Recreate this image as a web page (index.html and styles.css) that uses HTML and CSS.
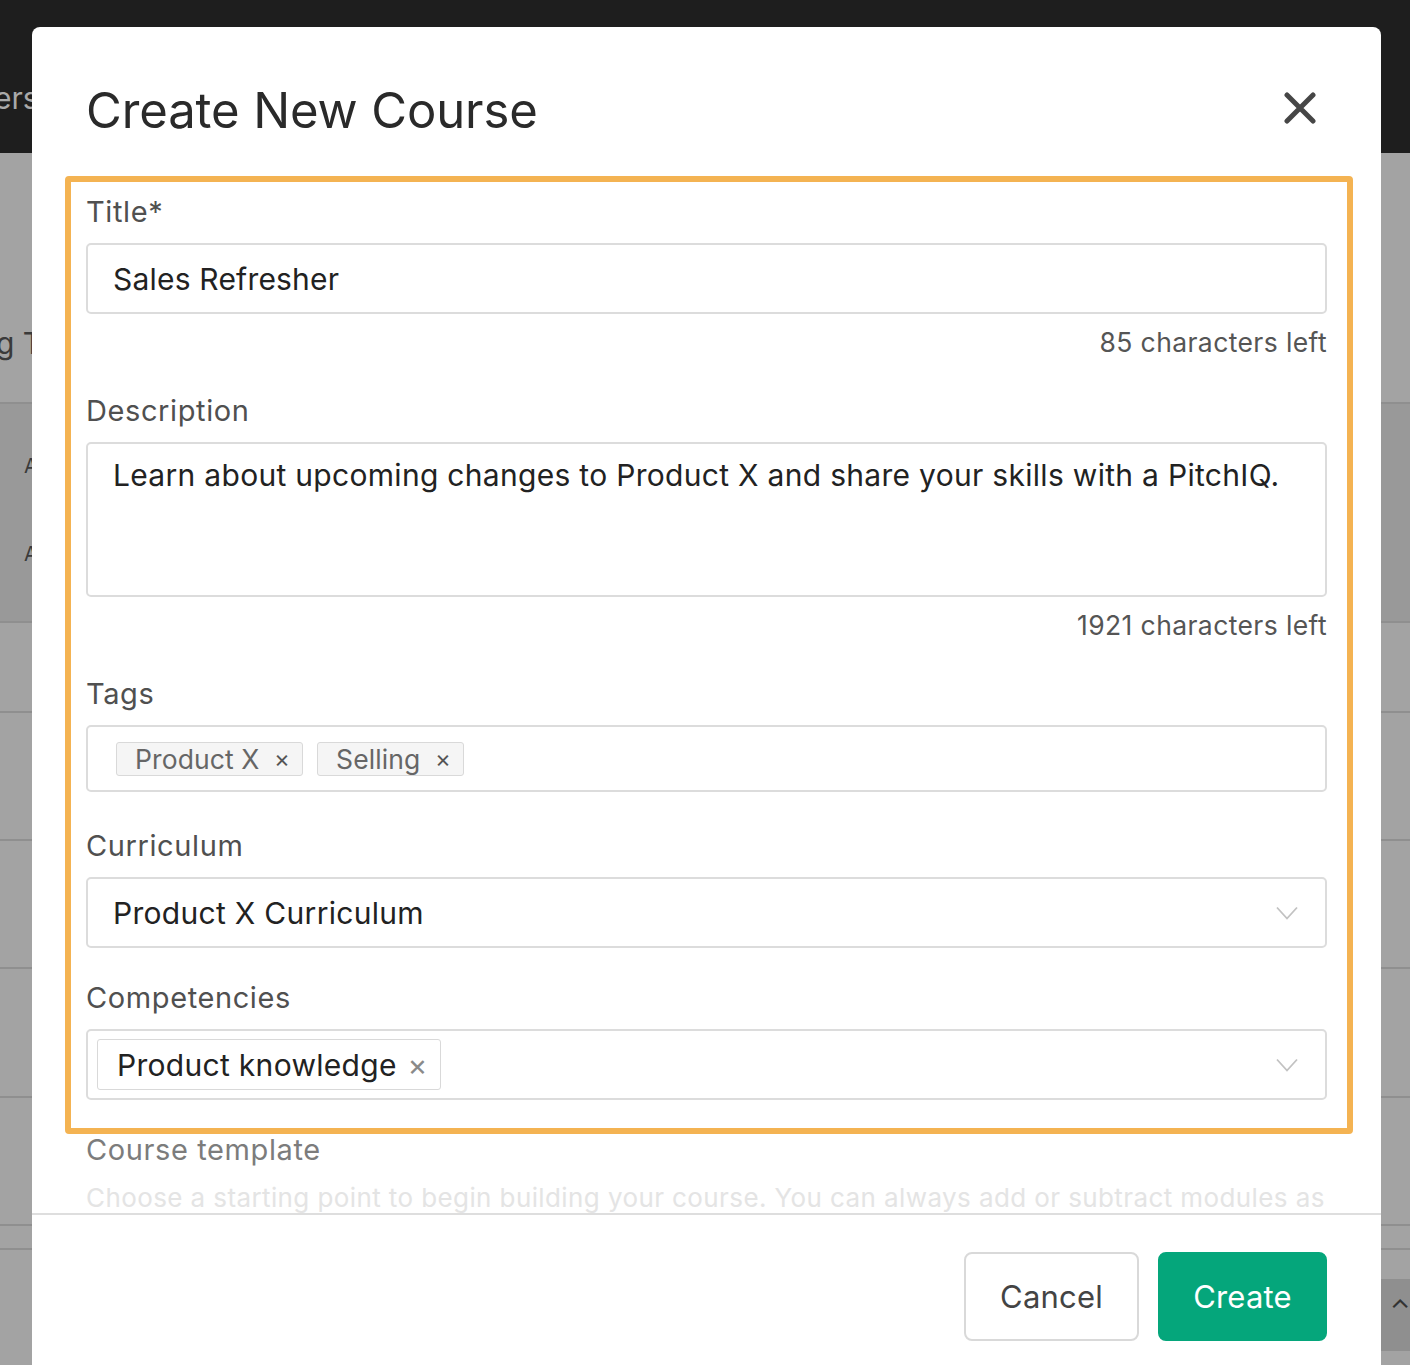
FILE: index.html
```html
<!DOCTYPE html>
<html lang="en">
<head>
<meta charset="utf-8">
<title>Create New Course</title>
<link rel="stylesheet" href="styles.css">
</head>
<body>
<div class="page">
  <header class="topbar"><span class="topbar-text">ers</span></header>
  <div class="rows">
    <div class="row row-first"><span class="row-text">g T</span></div>
    <div class="row row-band">
      <span class="band-text">A</span>
      <span class="band-text">A</span>
    </div>
    <div class="row row-h90"></div>
    <div class="row row-h128"></div>
    <div class="row row-h128"></div>
    <div class="row row-h129"></div>
    <div class="row row-h128"></div>
    <div class="row row-h23"></div>
    <div class="row row-last"><div class="pager"><span class="pager-glyph">&#8963;</span></div></div>
  </div>

  <div class="modal" role="dialog" aria-labelledby="modal-title">
    <div class="modal-header">
      <h1 class="modal-title" id="modal-title">Create New Course</h1>
      <button class="close" type="button" aria-label="Close">
        <svg width="32" height="32" viewBox="0 0 32 32" aria-hidden="true">
          <path d="M3 3 L29 29 M29 3 L3 29" stroke="#464646" stroke-width="5" stroke-linecap="round" fill="none"/>
        </svg>
      </button>
    </div>

    <div class="modal-body">
      <div class="highlight">
        <div class="field">
          <label class="field-label">Title*</label>
          <div class="input">Sales Refresher</div>
          <div class="counter">85 characters left</div>
        </div>

        <div class="field field-after-counter">
          <label class="field-label">Description</label>
          <div class="textarea">Learn about upcoming changes to Product X and share your skills with a PitchIQ.</div>
          <div class="counter">1921 characters left</div>
        </div>

        <div class="field field-after-counter">
          <label class="field-label">Tags</label>
          <div class="tags-box">
            <span class="tag">Product X <span class="tag-x">&#215;</span></span>
            <span class="tag">Selling <span class="tag-x">&#215;</span></span>
          </div>
        </div>

        <div class="field field-curriculum">
          <label class="field-label">Curriculum</label>
          <div class="select">
            <span class="select-value">Product X Curriculum</span>
            <svg class="chevron" width="22" height="14" viewBox="0 0 22 14" aria-hidden="true">
              <polyline points="1,1.5 11,12.5 21,1.5" fill="none" stroke="#c2c2c2" stroke-width="1.8"/>
            </svg>
          </div>
        </div>

        <div class="field field-competencies">
          <label class="field-label">Competencies</label>
          <div class="select select-multi">
            <span class="chip">Product knowledge <span class="chip-x">&#215;</span></span>
            <svg class="chevron" width="22" height="14" viewBox="0 0 22 14" aria-hidden="true">
              <polyline points="1,1.5 11,12.5 21,1.5" fill="none" stroke="#c2c2c2" stroke-width="1.8"/>
            </svg>
          </div>
        </div>
      </div>

      <div class="field field-template">
        <label class="field-label template-label">Course template</label>
        <p class="template-help">Choose a starting point to begin building your course. You can always add or subtract modules as needed.</p>
      </div>
    </div>

    <div class="modal-footer">
      <button class="btn btn-cancel" type="button">Cancel</button>
      <button class="btn btn-create" type="button">Create</button>
    </div>
  </div>
</div>
</body>
</html>
```

FILE: styles.css
```css
* {
  box-sizing: border-box;
}

html, body {
  margin: 0;
  padding: 0;
}

body {
  font-family: Inter, "Noto Sans", "Liberation Sans", sans-serif;
  background: #a3a3a3;
  overflow: hidden;
}

.page {
  position: relative;
  width: 1410px;
  height: 1365px;
  overflow: hidden;
}

/* ---------- dimmed page behind the dialog ---------- */
.topbar {
  height: 153px;
  background: #1e1e1e;
  padding-top: 80px;
}

.topbar-text {
  display: block;
  margin-left: -6px;
  font-size: 30px;
  line-height: 36px;
  color: #a9a9a9;
}

.rows {
  background: #a3a3a3;
}

.row {
  border-bottom: 2px solid #8f8f8f;
}

.row-first {
  height: 251px;
  padding-top: 172px;
}

.row-text {
  display: block;
  margin-left: -4px;
  font-size: 30px;
  line-height: 36px;
  color: #3a3a3a;
}

.row-band {
  height: 219px;
  background: #999999;
  padding: 50px 0 0 24px;
  display: flex;
  flex-direction: column;
  gap: 64px;
}

.band-text {
  font-size: 20px;
  line-height: 24px;
  color: #3a3a3a;
}

.row-h90 { height: 90px; }
.row-h128 { height: 128px; }
.row-h129 { height: 129px; }
.row-h23 { height: 24px; }

.row-last {
  height: 140px;
  border-bottom: 0;
  padding-top: 29px;
  display: flex;
  justify-content: flex-end;
}

.pager {
  width: 40px;
  height: 72px;
  background: #8f8f8f;
}

.pager-glyph {
  display: block;
  padding: 14px 0 0 20px;
  font-size: 26px;
  color: #333;
}

/* ---------- dialog ---------- */
.modal {
  position: absolute;
  left: 32px;
  top: 27px;
  width: 1349px;
  height: 1400px;
  background: #ffffff;
  border-radius: 8px 8px 0 0;
  display: flex;
  flex-direction: column;
}

.modal-header {
  height: 149px;
  flex: none;
  display: flex;
  justify-content: space-between;
  align-items: flex-start;
  padding: 55px 54px 0 54px;
}

.modal-title {
  margin: 0;
  font-size: 49px;
  line-height: 58px;
  font-weight: 400;
  color: #2a2a2a;
  letter-spacing: -0.1px;
}

.close {
  margin-top: 10px;
  margin-right: 11px;
  width: 32px;
  height: 32px;
  padding: 0;
  border: 0;
  background: none;
  display: block;
}

.close svg {
  display: block;
}

.modal-body {
  height: 1037px;
  flex: none;
  overflow: hidden;
  padding: 0 54px;
}

.highlight {
  border: 6px solid #f4b352;
  border-radius: 4px;
  margin: 0 -26px 0 -21px;
  padding: 12px 20px 28px 15px;
}

.field-after-counter {
  margin-top: 33px;
}

.field-curriculum {
  margin-top: 36px;
}

.field-competencies {
  margin-top: 32px;
}

.field-label {
  display: block;
  font-size: 29px;
  line-height: 36px;
  color: #505050;
  letter-spacing: 0.6px;
  margin-bottom: 13px;
}

.input {
  height: 71px;
  border: 2px solid #dcdcdc;
  border-radius: 5px;
  padding: 0 25px;
  display: flex;
  align-items: center;
  font-size: 30px;
  letter-spacing: 0.2px;
  color: #222;
}

.textarea {
  height: 155px;
  border: 2px solid #dcdcdc;
  border-radius: 5px;
  padding: 9px 25px;
  font-size: 30px;
  line-height: 45px;
  letter-spacing: 0.3px;
  color: #222;
}

.counter {
  margin-top: 10px;
  text-align: right;
  font-size: 26.5px;
  line-height: 36px;
  color: #555;
  letter-spacing: 0.4px;
}

.tags-box {
  height: 67px;
  border: 2px solid #dcdcdc;
  border-radius: 5px;
  padding: 0 28px;
  display: flex;
  align-items: center;
  gap: 14px;
}

.tag {
  height: 34px;
  display: inline-flex;
  align-items: center;
  padding: 0 12px 0 18px;
  background: #f5f5f5;
  border: 1.5px solid #d9d9d9;
  border-radius: 3px;
  font-size: 26.5px;
  letter-spacing: 0.1px;
  color: #666;
  white-space: pre;
}

.tag-x {
  font-size: 24px;
  color: #555;
  margin-left: 7px;
}

.select {
  height: 71px;
  border: 2px solid #dcdcdc;
  border-radius: 5px;
  padding: 0 27px 0 25px;
  display: flex;
  align-items: center;
  justify-content: space-between;
  font-size: 30px;
  letter-spacing: 0.3px;
  color: #222;
}

.select-multi {
  padding-left: 9px;
}

.chevron {
  display: block;
  flex: none;
}

.chip {
  height: 51px;
  display: inline-flex;
  align-items: center;
  padding: 0 12px 0 19px;
  border: 1.5px solid #d9d9d9;
  border-radius: 3px;
  background: #fff;
  font-size: 30px;
  color: #222;
  white-space: pre;
}

.chip-x {
  font-size: 30px;
  color: #8a8a8a;
  margin-left: 2px;
}

.field-template {
  margin-top: -2px;
}

.template-label {
  color: #7c7c7c;
  margin-bottom: 12px;
}

.template-help {
  margin: 0;
  font-size: 26px;
  line-height: 36px;
  color: #e4e4e4;
  letter-spacing: 0.4px;
}

.modal-footer {
  flex: none;
  border-top: 2px solid #dedede;
  padding: 37px 54px 0 54px;
  display: flex;
  justify-content: flex-end;
  gap: 19px;
}

.btn {
  height: 89px;
  border-radius: 8px;
  font-family: inherit;
  font-size: 31px;
  letter-spacing: 0.2px;
  padding: 0;
  cursor: pointer;
}

.btn-cancel {
  width: 175px;
  background: #fff;
  border: 2px solid #d9d9d9;
  color: #444;
}

.btn-create {
  width: 169px;
  background: #05a67b;
  border: 2px solid #05a67b;
  color: #fff;
}
```
